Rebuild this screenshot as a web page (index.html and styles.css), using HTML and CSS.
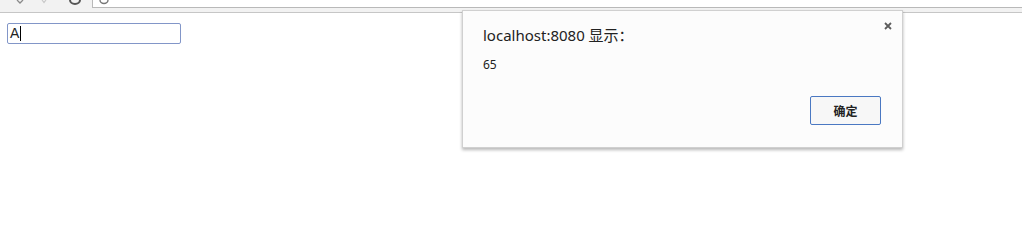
FILE: index.html
```html
<!DOCTYPE html>
<html>
<head>
<meta charset="utf-8">
<link rel="stylesheet" href="styles.css">
</head>
<body>
<div class="toolbar">
  <div class="nav">
    <svg class="ico" width="92" height="12" viewBox="0 0 92 12">
      <path d="M17 0 L20 3 L23 0" fill="none" stroke="#8a8a8a" stroke-width="1.3"/>
      <path d="M42 0 L44 2.5 L46 0" fill="none" stroke="#c8c8c8" stroke-width="1.2"/>
      <path d="M70 0 A5 4 0 0 0 80 0" fill="none" stroke="#555" stroke-width="2"/>
    </svg>
  </div>
  <div class="omnibox">
    <svg width="20" height="8" viewBox="0 0 20 8">
      <path d="M7 0 A4 3.5 0 0 0 15 0" fill="none" stroke="#777" stroke-width="1.4"/>
    </svg>
  </div>
</div>
<div class="page">
  <div class="field">A<span class="caret"></span></div>
</div>
<div class="dialog">
  <svg class="close" width="8" height="8" viewBox="0 0 8 8">
    <path d="M1 1 L7 7 M7 1 L1 7" stroke="#5c5c5c" stroke-width="1.8"/>
  </svg>
  <div class="title">localhost:8080 显示：</div>
  <div class="msg">65</div>
  <div class="actions"><button class="ok">确定</button></div>
</div>
</body>
</html>
```
FILE: styles.css
```css
html, body {
  margin: 0;
  padding: 0;
  background: #fff;
  font-family: "Noto Sans", "Noto Sans CJK SC", sans-serif;
}
.toolbar {
  height: 12px;
  background: #f2f2f2;
  border-bottom: 1px solid #c6c6c6;
  display: flex;
}
.nav {
  width: 92px;
  height: 12px;
}
.ico { display: block; }
.omnibox {
  flex: 1;
  height: 7px;
  background: #fff;
  border-left: 1px solid #b9b9b9;
  border-bottom: 1px solid #b9b9b9;
  overflow: hidden;
}
.omnibox svg { display: block; }
.page {
  padding: 10px 0 0 7px;
}
.field {
  width: 170px;
  height: 19px;
  border: 1px solid #8296c8;
  border-radius: 2px;
  box-sizing: content-box;
  padding: 0 0 0 2px;
  font-family: "Liberation Sans", Arial, sans-serif;
  font-size: 14px;
  line-height: 19px;
  color: #222;
  display: flex;
  align-items: center;
}
.caret {
  display: inline-block;
  width: 1px;
  height: 15px;
  background: #000;
  margin-left: 1px;
}
.dialog {
  position: absolute;
  left: 462px;
  top: 10px;
  width: 439px;
  height: 136px;
  background: #fcfcfc;
  border: 1px solid #d0d0d0;
  box-shadow: 0 2px 3px rgba(0,0,0,0.28);
  padding: 0;
}
.close {
  position: absolute;
  left: 421px;
  top: 11px;
  display: block;
}
.title {
  margin: 13px 0 0 20px;
  font-size: 15px;
  line-height: 22px;
  color: #222;
}
.msg {
  margin: 11px 0 0 20px;
  font-size: 12px;
  line-height: 16px;
  color: #222;
}
.actions {
  display: flex;
  justify-content: flex-end;
  padding: 23px 21px 0 0;
}
.ok {
  width: 71px;
  height: 29px;
  background: #f7f7f7;
  border: 1px solid #4a78c2;
  border-radius: 2px;
  font-family: "Noto Sans CJK SC", sans-serif;
  font-size: 12px;
  font-weight: bold;
  color: #222;
  padding: 0;
}
```
